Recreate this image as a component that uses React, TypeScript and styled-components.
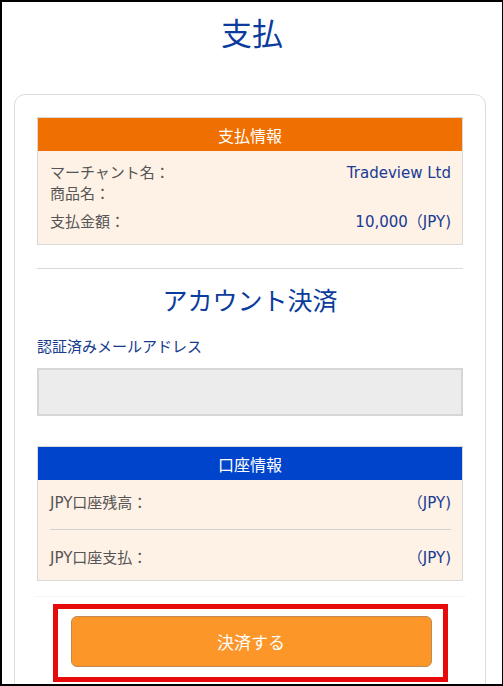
import React from 'react'
import styled, { createGlobalStyle } from 'styled-components'

const FONT = `"DejaVu Sans", "Noto Sans CJK JP", sans-serif`

const GlobalStyle = createGlobalStyle`
  html, body {
    margin: 0;
    padding: 0;
    background: #fff;
  }
  body {
    font-family: ${FONT};
  }
`

interface InfoRow {
  label: string
  value?: string
}

const paymentRows: InfoRow[] = [
  { label: 'マーチャント名：', value: 'Tradeview Ltd' },
  { label: '商品名：' },
  { label: '支払金額：', value: '10,000（JPY)' },
]

const accountRows: InfoRow[] = [
  { label: 'JPY口座残高：', value: '（JPY)' },
  { label: 'JPY口座支払：', value: '（JPY)' },
]

const App = () => {
  return (
    <>
      <GlobalStyle />
      <SFrame>
        <STitle>支払</STitle>
        <SCard>
          <SInfoBox>
            <SInfoHeader $color="#ef6f00">支払情報</SInfoHeader>
            <SPaymentBody>
              {paymentRows.map((row) => (
                <SPaymentRow key={row.label}>
                  <SLabel>{row.label}</SLabel>
                  {row.value && <SValue>{row.value}</SValue>}
                </SPaymentRow>
              ))}
            </SPaymentBody>
          </SInfoBox>

          <SDivider />

          <SSectionTitle>アカウント決済</SSectionTitle>
          <SFieldLabel>認証済みメールアドレス</SFieldLabel>
          <SInput readOnly value="" />

          <SInfoBox>
            <SInfoHeader $color="#0044cc">口座情報</SInfoHeader>
            <SAccountBody>
              {accountRows.map((row) => (
                <SAccountRow key={row.label}>
                  <SLabel>{row.label}</SLabel>
                  <SValue>{row.value}</SValue>
                </SAccountRow>
              ))}
            </SAccountBody>
          </SInfoBox>

          <SFaintRule />

          <SHighlight>
            <SSubmitButton type="button">決済する</SSubmitButton>
          </SHighlight>
        </SCard>
      </SFrame>
    </>
  )
}

const SFrame = styled.div`
  box-sizing: border-box;
  width: 503px;
  height: 686px;
  overflow: hidden;
  border: 2px solid #000;
  border-right-width: 1px;
  background: #fff;
`

const STitle = styled.h1`
  margin: 12px 0 0;
  text-align: center;
  font-size: 31px;
  line-height: 40px;
  font-weight: 400;
  color: #0b3b9c;
`

const SCard = styled.div`
  margin: 40px 16px 0 12px;
  padding: 22px 22px 40px;
  border: 1px solid #dcdcdc;
  border-radius: 11px;
`

const SInfoBox = styled.div`
  border: 1px solid #d8d8d8;
  background: #fef1e6;
`

const SInfoHeader = styled.div<{ $color: string }>`
  height: 33px;
  display: flex;
  align-items: center;
  justify-content: center;
  background: ${({ $color }) => $color};
  color: #fff;
  font-size: 16px;
`

const SPaymentBody = styled.div`
  padding: 12px 11px 11px 12px;
`

const SPaymentRow = styled.div`
  display: flex;
  justify-content: space-between;
  font-size: 15px;
  line-height: 21px;

  &:last-child {
    margin-top: 7px;
  }
`

const SLabel = styled.span`
  color: #555;
`

const SValue = styled.span`
  color: #183b93;
`

const SAccountBody = styled.div`
  padding: 0 11px 0 12px;
`

const SAccountRow = styled.div`
  display: flex;
  justify-content: space-between;
  font-size: 15px;
  line-height: 21px;
  padding: 13px 0 15px;
  border-bottom: 1px solid #d2d2d2;

  &:last-child {
    padding: 18px 0 11px;
    border-bottom: none;
  }
`

const SDivider = styled.hr`
  margin: 23px 0 0;
  border: none;
  border-top: 1px solid #dadada;
`

const SSectionTitle = styled.h2`
  margin: 16px 0 0;
  text-align: center;
  font-size: 25px;
  line-height: 34px;
  font-weight: 400;
  color: #0b3b9c;
`

const SFieldLabel = styled.div`
  margin-top: 18px;
  font-size: 15px;
  line-height: 21px;
  color: #163a8c;
`

const SInput = styled.input`
  display: block;
  box-sizing: border-box;
  width: 100%;
  height: 48px;
  margin: 10px 0 30px;
  border: 2px solid #d6d6d6;
  background: #ececec;
  outline: none;
`

const SFaintRule = styled.div`
  margin: 15px -3px 0;
  border-top: 1px solid #f6f6f6;
`

const SHighlight = styled.div`
  width: 395px;
  box-sizing: border-box;
  margin: 7px auto 0;
  padding: 7px 11px 10px 13px;
  border: 5px solid #e60a0a;
`

const SSubmitButton = styled.button`
  display: block;
  width: 100%;
  height: 51px;
  border: 1px solid #c08b52;
  border-radius: 6px;
  background: #fd9628;
  color: #fff;
  font-family: ${FONT};
  font-size: 17px;
`

export default App
